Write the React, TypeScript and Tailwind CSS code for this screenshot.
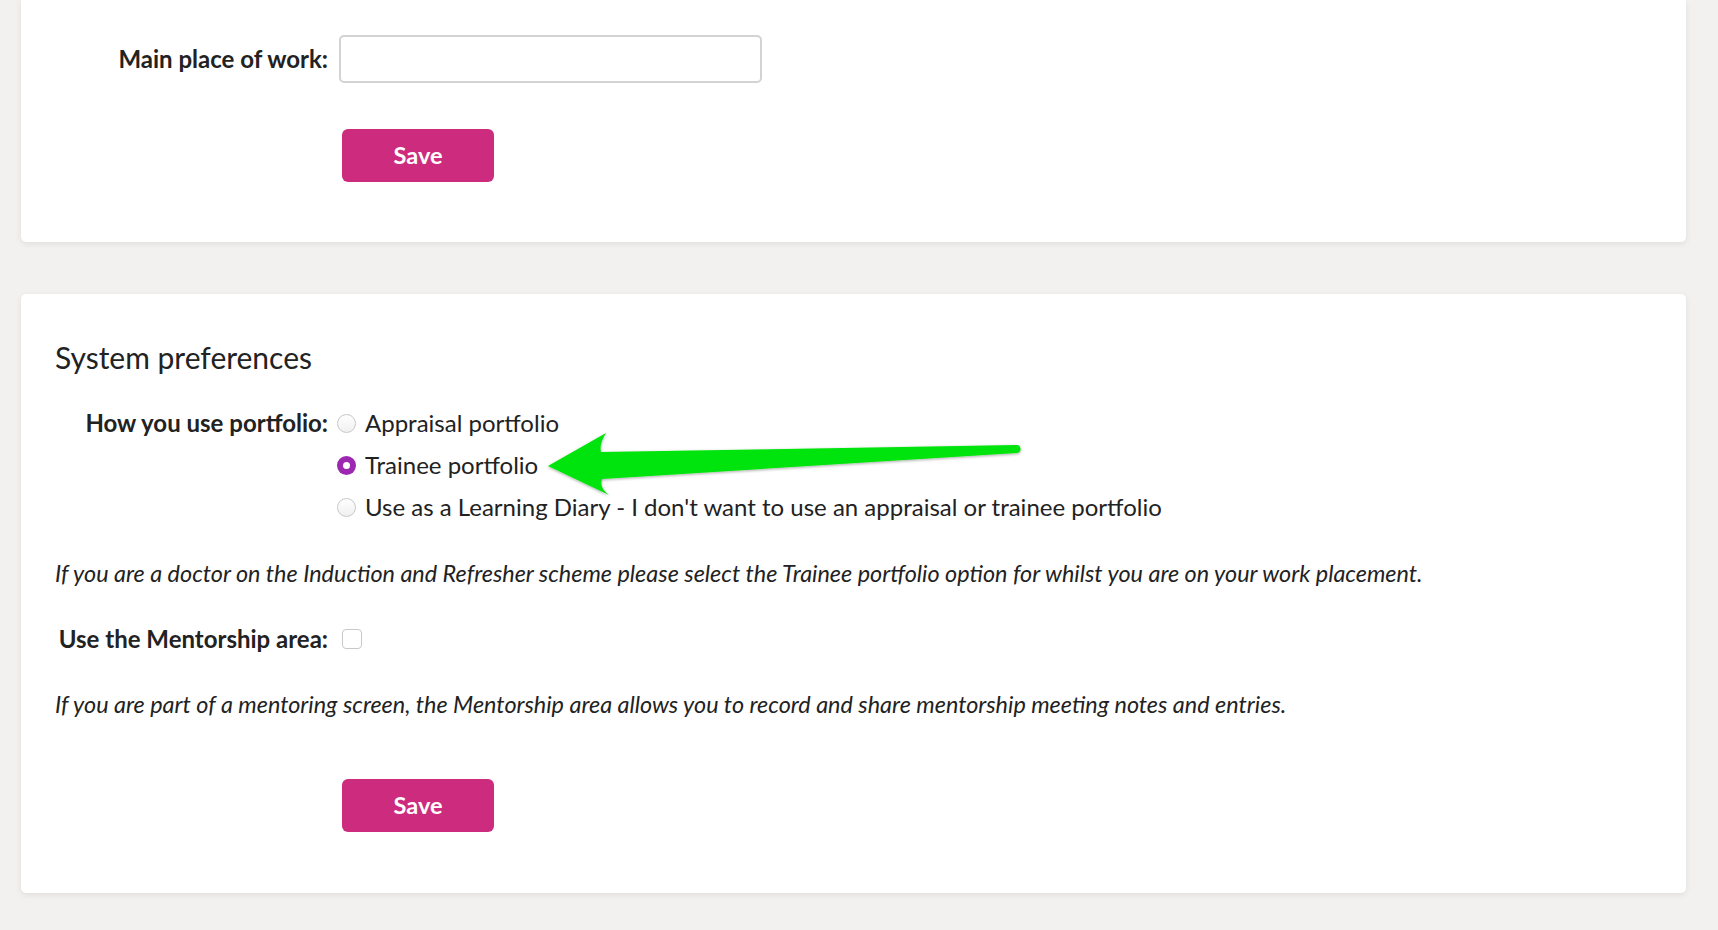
import React from "react";

function Radio({ checked }: { checked?: boolean }) {
  if (checked) {
    return (
      <span className="flex h-[19px] w-[19px] shrink-0 items-center justify-center rounded-full bg-[#9c27b0]">
        <span className="h-[7px] w-[7px] rounded-full bg-white" />
      </span>
    );
  }
  return (
    <span className="h-[19px] w-[19px] shrink-0 rounded-full border border-[#c8c8c8] bg-gradient-to-b from-white to-[#f0f0f0]" />
  );
}

function SaveButton() {
  return (
    <button className="ml-[3px] h-[53px] w-[152px] rounded-[6px] bg-[#cd2b7e] text-[23.5px] font-bold text-white">
      Save
    </button>
  );
}

export default function App() {
  const font = { fontFamily: "Lato, 'Noto Sans', sans-serif" };
  return (
    <div
      className="relative min-h-[930px] w-[1718px] bg-[#f2f1ef] pl-[21px] pr-[32px] text-[#222]"
      style={font}
    >
      <div className="flex h-[242px] flex-col rounded-b-[5px] bg-white pt-[35px] shadow-[0_2px_6px_rgba(0,0,0,0.08)]">
        <div className="flex items-center">
          <div className="w-[318px] shrink-0 pr-[11px] text-right text-[24px] font-bold">Main place of work:</div>
          <div className="h-[48px] w-[423px] rounded-[5px] border-2 border-[#d3d3d3] bg-white" />
        </div>
        <div className="mt-[46px] pl-[318px]">
          <SaveButton />
        </div>
      </div>

      <div className="mt-[52px] flex h-[599px] flex-col rounded-[5px] bg-white pl-[34px] pt-[44px] shadow-[0_2px_6px_rgba(0,0,0,0.08)]">
        <h2 className="text-[30px] leading-[38px] font-normal">System preferences</h2>
        <div className="mt-[26px] flex">
          <div className="w-[282px] shrink-0 pr-[9px] text-right text-[24px] leading-[42px] font-bold">
            How you use portfolio:
          </div>
          <div className="flex flex-col">
            {[
              ["Appraisal portfolio", false],
              ["Trainee portfolio", true],
              ["Use as a Learning Diary - I don't want to use an appraisal or trainee portfolio", false],
            ].map(([label, checked]) => (
              <div key={label as string} className="flex h-[42px] items-center gap-[9px]">
                <Radio checked={checked as boolean} />
                <span className="text-[24px]">{label as string}</span>
              </div>
            ))}
          </div>
        </div>
        <p className="mt-[30px] text-[23.4px] leading-[30px] italic">
          If you are a doctor on the Induction and Refresher scheme please select the Trainee portfolio option for whilst you are on your work placement.
        </p>
        <div className="mt-[30px] flex items-center">
          <div className="w-[287px] shrink-0 pr-[14px] text-right text-[24px] leading-[42px] font-bold">
            Use the Mentorship area:
          </div>
          <span className="h-[20px] w-[20px] rounded-[4px] border border-[#c8c8c8] bg-white" />
        </div>
        <p className="mt-[29px] text-[23.4px] leading-[30px] italic">
          If you are part of a mentoring screen, the Mentorship area allows you to record and share mentorship meeting notes and entries.
        </p>
        <div className="mt-[60px] pl-[284px]">
          <SaveButton />
        </div>
      </div>

      <svg
        className="pointer-events-none absolute left-0 top-0"
        width="1718"
        height="930"
        viewBox="0 0 1718 930"
      >
        <defs>
          <filter id="sh" x="-10%" y="-50%" width="120%" height="200%">
            <feDropShadow dx="0" dy="1" stdDeviation="1.5" floodColor="#000" floodOpacity="0.35" />
          </filter>
        </defs>
        <path
          d="M548,466 L606,433 Q599,444 601,452 L1016,445 A4,4 0 0 1 1017,453 L602,479 Q599,488 609,495 Z"
          fill="#00e40a"
          filter="url(#sh)"
        />
      </svg>
    </div>
  );
}
